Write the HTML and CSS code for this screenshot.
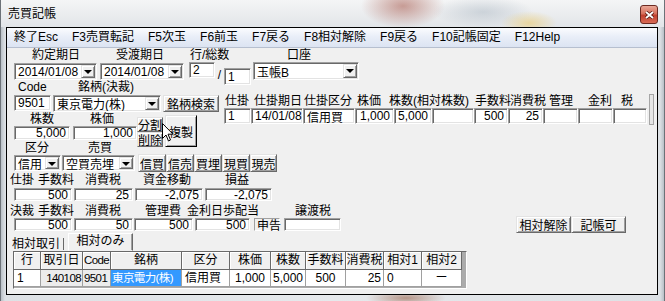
FILE: index.html
```html
<!DOCTYPE html>
<html lang="ja">
<head>
    <meta charset="UTF-8">
    <title>売買記帳</title>
    <link rel="stylesheet" href="styles.css">
</head>
<body>
<div class="window">
    <div class="titlebar">
        <span class="title">売買記帳</span>
        <span class="close">
            <svg width="9" height="8" viewBox="0 0 9 8"><path d="M1 1l7 6M8 1L1 7" stroke="#5a1c14" stroke-width="3.4"/><path d="M1 1l7 6M8 1L1 7" stroke="#fff" stroke-width="1.8"/></svg>
        </span>
    </div>

    <div class="client">
        <div class="menubar">
            <span>終了Esc</span>
            <span>F3売買転記</span>
            <span>F5次玉</span>
            <span>F6前玉</span>
            <span>F7戻る</span>
            <span>F8相対解除</span>
            <span>F9戻る</span>
            <span>F10記帳固定</span>
            <span>F12Help</span>
        </div>

        <!-- dates / line / account -->
        <div class="row caps caps-1">
            <span class="w84">約定期日</span>
            <span class="w74">受渡期日</span>
            <span class="w97">行/総数</span>
            <span>口座</span>
        </div>
        <div class="row ctl-1">
            <div class="combo date w83"><span class="val">2014/01/08</span><span class="drop"></span></div>
            <div class="combo date w84 ml3"><span class="val">2014/01/08</span><span class="drop"></span></div>
            <div class="tb left line-no w26 ml5">2</div>
            <span class="slash">/</span>
            <div class="tb left line-total w27">1</div>
            <div class="combo acct w106 ml2"><span class="val">玉帳B</span><span class="drop"></span></div>
        </div>

        <div class="row caps caps-2">
            <span class="w60">Code</span>
            <span>銘柄(決裁)</span>
        </div>

        <div class="mid">
            <div class="mid-left">
                <div class="row ctl-2">
                    <div class="tb left w37">9501</div>
                    <div class="combo w108 ml2"><span class="val">東京電力(株)</span><span class="drop"></span></div>
                    <button class="btn w56 ml2">銘柄検索</button>
                </div>
                <div class="split">
                    <div class="qty">
                        <div class="row caps caps-3">
                            <span class="w60">株数</span>
                            <span>株価</span>
                        </div>
                        <div class="row box-3">
                            <div class="tb w56">5,000</div>
                            <div class="tb w64 ml3">1,000</div>
                        </div>
                    </div>
                    <div class="btn-col">
                        <button class="btn">分割</button>
                        <button class="btn">削除</button>
                    </div>
                    <button class="btn copy">複製</button>
                </div>
            </div>

            <!-- open position grid -->
            <div class="pos">
                <div class="pos-grid">
                    <div class="pos-head">
                        <span class="w29">仕掛</span>
                        <span class="w50">仕掛期日</span>
                        <span class="w53">仕掛区分</span>
                        <span class="w32">株価</span>
                        <span class="w86">株数(相対株数)</span>
                        <span class="w35">手数料</span>
                        <span class="w39">消費税</span>
                        <span class="w39">管理</span>
                        <span class="w33">金利</span>
                        <span>税</span>
                    </div>
                    <div class="pos-row">
                        <div class="tb left w27">1</div>
                        <div class="tb left w52">14/01/08</div>
                        <div class="tb left w52">信用買</div>
                        <div class="tb w39">1,000</div>
                        <div class="tb w38">5,000</div>
                        <div class="tb w42"></div>
                        <div class="tb w34">500</div>
                        <div class="tb w35">25</div>
                        <div class="tb w35"></div>
                        <div class="tb w35"></div>
                        <div class="tb w34"></div>
                    </div>
                </div>
                <div class="pos-scroll"></div>
            </div>
        </div>

        <div class="row caps caps-4">
            <span class="w63">区分</span>
            <span>売買</span>
        </div>
        <div class="row ctl-4">
            <div class="combo w47"><span class="val">信用</span><span class="drop"></span></div>
            <div class="combo w73 ml1"><span class="val">空買売埋</span><span class="drop"></span></div>
            <button class="btn w28 ml3">信買</button>
            <button class="btn w28">信売</button>
            <button class="btn w28">買埋</button>
            <button class="btn w28">現買</button>
            <button class="btn w27">現売</button>
        </div>

        <div class="row caps caps-5">
            <span class="w28">仕掛</span>
            <span class="w47">手数料</span>
            <span class="w58">消費税</span>
            <span class="w82">資金移動</span>
            <span>損益</span>
        </div>
        <div class="row box-5">
            <div class="tb w58">500</div>
            <div class="tb w59 ml2">25</div>
            <div class="tb w68 ml2">-2,075</div>
            <div class="tb w67 ml2">-2,075</div>
        </div>

        <div class="row caps caps-6">
            <span class="w28">決裁</span>
            <span class="w47">手数料</span>
            <span class="w60">消費税</span>
            <span class="w42">管理費</span>
            <span class="w108">金利日歩配当</span>
            <span>譲渡税</span>
        </div>
        <div class="row box-6">
            <div class="tb w58">500</div>
            <div class="tb w59 ml2">50</div>
            <div class="tb w59 ml1">500</div>
            <div class="tb w55 ml2">500</div>
            <div class="static w26 ml4">申告</div>
            <div class="tb w57 ml4"></div>
            <button class="btn side w55">相対解除</button>
            <button class="btn side-2 w55">記帳可</button>
        </div>

        <div class="row tabs">
            <span class="tab-on">相対取引</span>
            <span class="tab-off">相対のみ</span>
        </div>

        <!-- matched trades grid -->
        <div class="dg">
            <div class="dg-head">
                <span class="w27">行</span>
                <span class="w42">取引日</span>
                <span class="w28 left tight">Code</span>
                <span class="w71">銘柄</span>
                <span class="w48">区分</span>
                <span class="w41">株価</span>
                <span class="w35">株数</span>
                <span class="w40">手数料</span>
                <span class="w38">消費税</span>
                <span class="w38">相対1</span>
                <span class="w40">相対2</span>
            </div>
            <div class="dg-row">
                <span class="w27 left">1</span>
                <span class="w42 right fixed tight">140108</span>
                <span class="w28 left fixed tight">9501</span>
                <span class="w71 left sel tight">東京電力(株)</span>
                <span class="w48 left">信用買</span>
                <span class="w41">1,000</span>
                <span class="w35">5,000</span>
                <span class="w40">500</span>
                <span class="w38 right">25</span>
                <span class="w38 left">0</span>
                <span class="w40">ー</span>
            </div>
        </div>
    </div>

    <svg class="cursor" width="12" height="19" viewBox="0 0 12 19"><path d="M0.5 0.5v15l3.5-3.5 2.5 6 2-1-2.5-5.8h5z" fill="#fff" stroke="#000" stroke-width="1"/></svg>
</div>
</body>
</html>
```

FILE: styles.css
```css
* {
    margin: 0;
    padding: 0;
    box-sizing: border-box;
}

body {
    width: 665px;
    height: 301px;
    overflow: hidden;
    background: #d4d9de;
    font-family: "Liberation Sans", "Noto Sans CJK JP", sans-serif;
    font-size: 12px;
    color: #000;
}

.window {
    position: relative;
    width: 665px;
    height: 301px;
    border-left: 1px solid #6c7278;
    border-right: 1px solid #6c7278;
    background:
        radial-gradient(ellipse 40px 8px at 405px 298px, rgba(150, 95, 70, 0.6), transparent),
        linear-gradient(90deg, #b9c0c7 0, #dde1e5 4px, #e6e9ec 50%, #dde1e5 calc(100% - 4px), #b9c0c7 100%);
}

/* title bar */
.titlebar {
    height: 27px;
    display: flex;
    align-items: center;
    padding-left: 7px;
    background:
        radial-gradient(ellipse 42px 22px at 402px 6px, rgba(165, 85, 72, 0.55), transparent),
        radial-gradient(ellipse 28px 12px at 528px 23px, rgba(235, 205, 120, 0.65), transparent),
        radial-gradient(ellipse 50px 16px at 482px 12px, rgba(165, 178, 190, 0.45), transparent),
        linear-gradient(#f4f5f6, #e2e5e8);
}

.title {
    font-size: 12px;
    line-height: 14px;
}

.close {
    position: absolute;
    left: 639px;
    top: 5px;
    width: 18px;
    height: 19px;
    display: flex;
    align-items: center;
    justify-content: center;
    border: 1px solid #6b2a22;
    border-radius: 3px;
    background: linear-gradient(#eaa898, #d6705c 45%, #c2402e 55%, #d86b55);
}

.cursor {
    position: absolute;
    left: 161px;
    top: 123px;
}

/* client area */
.client {
    margin-left: 5px;
    width: 652px;
    height: 268px;
    border: 1px solid #000;
    background: #f0f0f0;
}

.menubar {
    height: 20px;
    display: flex;
    background: linear-gradient(#fbfcfe, #e9eef8 45%, #dce4f2);
    border-bottom: 1px solid #b6bfcf;
}

.menubar span {
    padding: 0 7px;
    line-height: 19px;
    white-space: nowrap;
}

.row {
    display: flex;
    align-items: flex-start;
}

.caps span {
    flex: none;
    white-space: nowrap;
}

/* controls */
.combo {
    flex: none;
    display: flex;
    height: 17px;
    background: #fff;
    border: 1px solid;
    border-color: #a0a0a0 #fff #fff #a0a0a0;
    box-shadow: inset 1px 1px 0 #696969, inset -1px -1px 0 #e3e3e3;
}

.combo .val {
    flex: 1;
    display: flex;
    align-items: center;
    padding-left: 3px;
    white-space: nowrap;
    overflow: hidden;
}

.combo .drop {
    position: relative;
    width: 14px;
    margin: 1px 1px 1px 0;
    background: #f0f0f0;
    border: 1px solid;
    border-color: #e3e3e3 #696969 #696969 #e3e3e3;
    box-shadow: inset 1px 1px 0 #fff, inset -1px -1px 0 #a0a0a0;
}

.combo .drop::after {
    content: "";
    position: absolute;
    left: 2px;
    top: 4px;
    border-style: solid;
    border-width: 4px 4px 0;
    border-color: #000 transparent transparent;
}

.tb {
    flex: none;
    display: flex;
    align-items: center;
    justify-content: flex-end;
    height: 14px;
    padding: 0 3px;
    background: #fff;
    border: 1px solid;
    border-color: #a0a0a0 #fff #fff #a0a0a0;
    box-shadow: inset 1px 1px 0 #696969, inset -1px -1px 0 #e3e3e3;
    white-space: nowrap;
    overflow: hidden;
}

.tb.left {
    justify-content: flex-start;
}

.static {
    flex: none;
    height: 13px;
    display: flex;
    align-items: center;
    padding-left: 2px;
    border: 1px solid;
    border-color: #a0a0a0 #fff #fff #a0a0a0;
    white-space: nowrap;
}

.btn {
    flex: none;
    display: flex;
    align-items: center;
    justify-content: center;
    font: inherit;
    color: #000;
    background: #f0f0f0;
    border: 1px solid;
    border-color: #e3e3e3 #696969 #696969 #e3e3e3;
    box-shadow: inset 1px 1px 0 #fff, inset -1px -1px 0 #a0a0a0;
    white-space: nowrap;
}

/* row 1 */
.caps-1 {
    height: 14px;
    line-height: 14px;
    padding-left: 25px;
}

.ctl-1 {
    height: 19px;
    padding-left: 7px;
}

.ctl-1 .date {
    margin-top: 1px;
}

.ctl-1 .line-no {
    height: 16px;
}

.slash {
    flex: none;
    width: 9px;
    margin-top: 6px;
    line-height: 14px;
    text-align: center;
}

.ctl-1 .line-total {
    height: 17px;
    margin-top: 6px;
}

.ctl-1 .acct {
    height: 18px;
}

/* row 2 */
.caps-2 {
    height: 13px;
    line-height: 13px;
    padding-left: 11px;
}

.mid {
    display: flex;
    height: 48px;
}

.mid-left {
    flex: none;
    width: 217px;
}

.ctl-2 {
    height: 18px;
    padding-left: 7px;
}

.ctl-2 > * {
    margin-top: 1px;
}

.ctl-2 .tb {
    height: 16px;
}

.ctl-2 .btn {
    height: 17px;
}

.split {
    display: flex;
    height: 30px;
    padding-left: 7px;
}

.qty {
    flex: none;
    width: 123px;
}

.caps-3 {
    height: 14px;
    line-height: 14px;
    padding-left: 16px;
}

.btn-col {
    flex: none;
    width: 26px;
    margin-top: 5px;
}

.btn-col .btn {
    width: 26px;
    height: 15px;
}

.btn.copy {
    width: 32px;
    height: 32px;
    margin: 3px 0 0 2px;
    border-color: #e3e3e3 #000 #000 #e3e3e3;
}

/* open position grid */
.pos {
    display: flex;
}

.pos-grid {
    width: 424px;
}

.pos-head {
    display: flex;
    height: 14px;
    line-height: 14px;
    padding-left: 1px;
}

.pos-head span {
    flex: none;
    white-space: nowrap;
}

.pos-row {
    display: flex;
}

.pos-row .tb {
    height: 16px;
}

.pos-scroll {
    width: 5px;
    height: 31px;
    margin-left: 1px;
    background: #e6e6e6;
    border: 1px solid #a6a6a6;
}

/* row 4 */
.caps-4 {
    height: 12px;
    line-height: 12px;
    padding-left: 18px;
}

.ctl-4 {
    height: 18px;
    padding-left: 7px;
}

.ctl-4 .combo {
    height: 16px;
    margin-top: 1px;
}

.ctl-4 .btn {
    height: 18px;
}

/* money rows */
.caps-5 {
    height: 16px;
    line-height: 16px;
    padding-left: 3px;
}

.box-5 {
    height: 13px;
    padding-left: 7px;
}

.box-5 .tb,
.box-6 .tb {
    height: 13px;
}

.caps-6 {
    height: 17px;
    line-height: 14px;
    padding: 3px 0 0 3px;
}

.box-6 {
    height: 14px;
    padding-left: 7px;
}

.box-6 .side {
    height: 17px;
    margin: -2px 0 0 175px;
}

.box-6 .side-2 {
    height: 17px;
    margin-top: -2px;
}

/* tabs */
.tabs {
    height: 19px;
    padding-left: 5px;
}

.tab-on {
    flex: none;
    width: 52px;
    margin-top: 6px;
    line-height: 12px;
    border-right: 1px solid #696969;
    white-space: nowrap;
}

.tab-off {
    flex: none;
    width: 65px;
    height: 18px;
    margin: 1px 0 0 4px;
    line-height: 15px;
    text-align: center;
    border: 1px solid;
    border-color: #fff #696969 transparent #fff;
    box-shadow: inset -1px 0 0 #a0a0a0;
}

/* matched trades grid */
.dg {
    margin-left: 6px;
    width: 454px;
    height: 38px;
    background: #ababab;
    border: 1px solid;
    border-color: #696969 #fff #fff #696969;
}

.dg-head,
.dg-row {
    display: flex;
}

.dg-head span {
    flex: none;
    height: 18px;
    line-height: 17px;
    text-align: center;
    background: #f0f0f0;
    border-right: 1px solid #696969;
    border-bottom: 1px solid #696969;
    box-shadow: inset 1px 1px 0 #fff;
    white-space: nowrap;
    overflow: hidden;
}

.dg-row span {
    flex: none;
    height: 17px;
    line-height: 16px;
    padding: 0 2px;
    text-align: center;
    background: #fff;
    border-right: 1px solid #a0a0a0;
    border-bottom: 1px solid #a0a0a0;
    white-space: nowrap;
    overflow: hidden;
}

.dg span.left {
    text-align: left;
    padding-left: 3px;
}

.dg span.right {
    text-align: right;
}

.dg span.tight {
    padding: 0 0 0 1px;
    letter-spacing: -0.6px;
    font-size: 11.5px;
}

.dg span.right.tight {
    padding: 0 1px 0 0;
}

.dg-row .fixed {
    background: #ececec;
}

.dg-row .sel {
    background: #3399ff;
    color: #fff;
}

/* spacing and widths */
.ml1 { margin-left: 1px; }
.ml2 { margin-left: 2px; }
.ml3 { margin-left: 3px; }
.ml4 { margin-left: 4px; }
.ml5 { margin-left: 5px; }

.w26 { width: 26px; }
.w27 { width: 27px; }
.w28 { width: 28px; }
.w29 { width: 29px; }
.w32 { width: 32px; }
.w33 { width: 33px; }
.w34 { width: 34px; }
.w35 { width: 35px; }
.w37 { width: 37px; }
.w38 { width: 38px; }
.w39 { width: 39px; }
.w40 { width: 40px; }
.w41 { width: 41px; }
.w42 { width: 42px; }
.w47 { width: 47px; }
.w48 { width: 48px; }
.w50 { width: 50px; }
.w52 { width: 52px; }
.w53 { width: 53px; }
.w55 { width: 55px; }
.w56 { width: 56px; }
.w57 { width: 57px; }
.w58 { width: 58px; }
.w59 { width: 59px; }
.w60 { width: 60px; }
.w63 { width: 63px; }
.w64 { width: 64px; }
.w67 { width: 67px; }
.w68 { width: 68px; }
.w71 { width: 71px; }
.w73 { width: 73px; }
.w74 { width: 74px; }
.w82 { width: 82px; }
.w83 { width: 83px; }
.w84 { width: 84px; }
.w86 { width: 86px; }
.w97 { width: 97px; }
.w106 { width: 106px; }
.w108 { width: 108px; }
```
